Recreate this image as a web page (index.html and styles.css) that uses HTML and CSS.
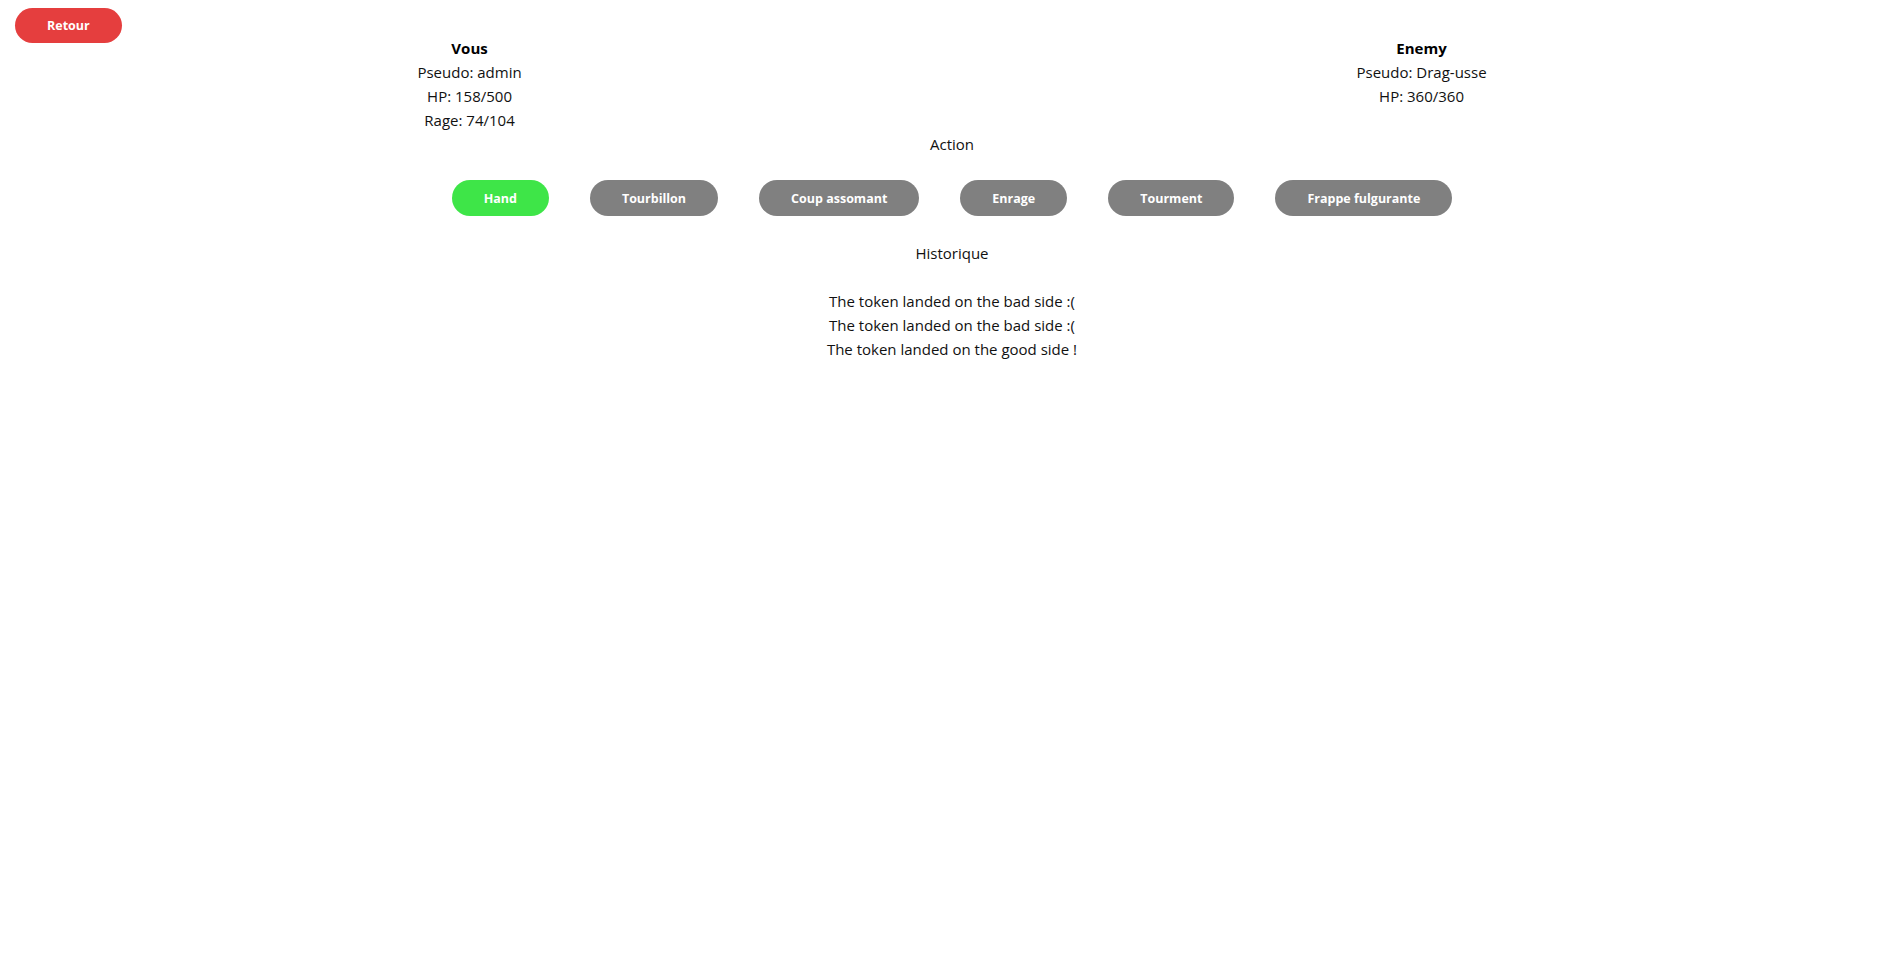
FILE: index.html
```html
<!DOCTYPE html>
<html lang="fr">
<head>
<meta charset="utf-8">
<title>Combat</title>
<link rel="stylesheet" href="styles.css">
</head>
<body>
<button class="btn btn-red back">Retour</button>
<main class="page">
  <section class="players">
    <div class="player">
      <div class="player-title">Vous</div>
      <div>Pseudo: admin</div>
      <div>HP: 158/500</div>
      <div>Rage: 74/104</div>
    </div>
    <div class="player">
      <div class="player-title">Enemy</div>
      <div>Pseudo: Drag-usse</div>
      <div>HP: 360/360</div>
    </div>
  </section>
  <div class="label">Action</div>
  <div class="actions">
    <button class="btn btn-green">Hand</button>
    <button class="btn btn-gray">Tourbillon</button>
    <button class="btn btn-gray">Coup assomant</button>
    <button class="btn btn-gray">Enrage</button>
    <button class="btn btn-gray">Tourment</button>
    <button class="btn btn-gray">Frappe fulgurante</button>
  </div>
  <div class="label history-title">Historique</div>
  <div class="history">
    <div>The token landed on the bad side :(</div>
    <div>The token landed on the bad side :(</div>
    <div>The token landed on the good side !</div>
  </div>
</main>
</body>
</html>
```

FILE: styles.css
```css
html, body {
  margin: 0;
  padding: 0;
  background: #ffffff;
}

body {
  font-family: "Open Sans", "Noto Sans", sans-serif;
  font-size: 15px;
  line-height: 24px;
  color: #111111;
}

.page {
  padding-top: 36px;
  text-align: center;
}

.players {
  display: flex;
  justify-content: space-around;
}

.player {
  text-align: center;
}

.player-title {
  font-weight: 700;
  color: #000000;
}

.label {
  text-align: center;
}

.actions {
  display: flex;
  justify-content: center;
  gap: 41px;
  margin-top: 24px;
}

.btn {
  display: inline-flex;
  align-items: center;
  justify-content: center;
  height: 36px;
  padding: 0 32px;
  border: none;
  border-radius: 999px;
  color: #ffffff;
  font-family: "Open Sans", "Noto Sans", sans-serif;
  font-size: 12.5px;
  font-weight: 700;
  cursor: pointer;
}

.btn-green { background: #3ee548; }
.btn-gray { background: #808080; }
.btn-red { background: #e53e3e; }

.back {
  position: absolute;
  top: 8px;
  left: 15px;
  height: 35px;
}

.history-title {
  margin-top: 25px;
}

.history {
  margin-top: 24px;
}
```
